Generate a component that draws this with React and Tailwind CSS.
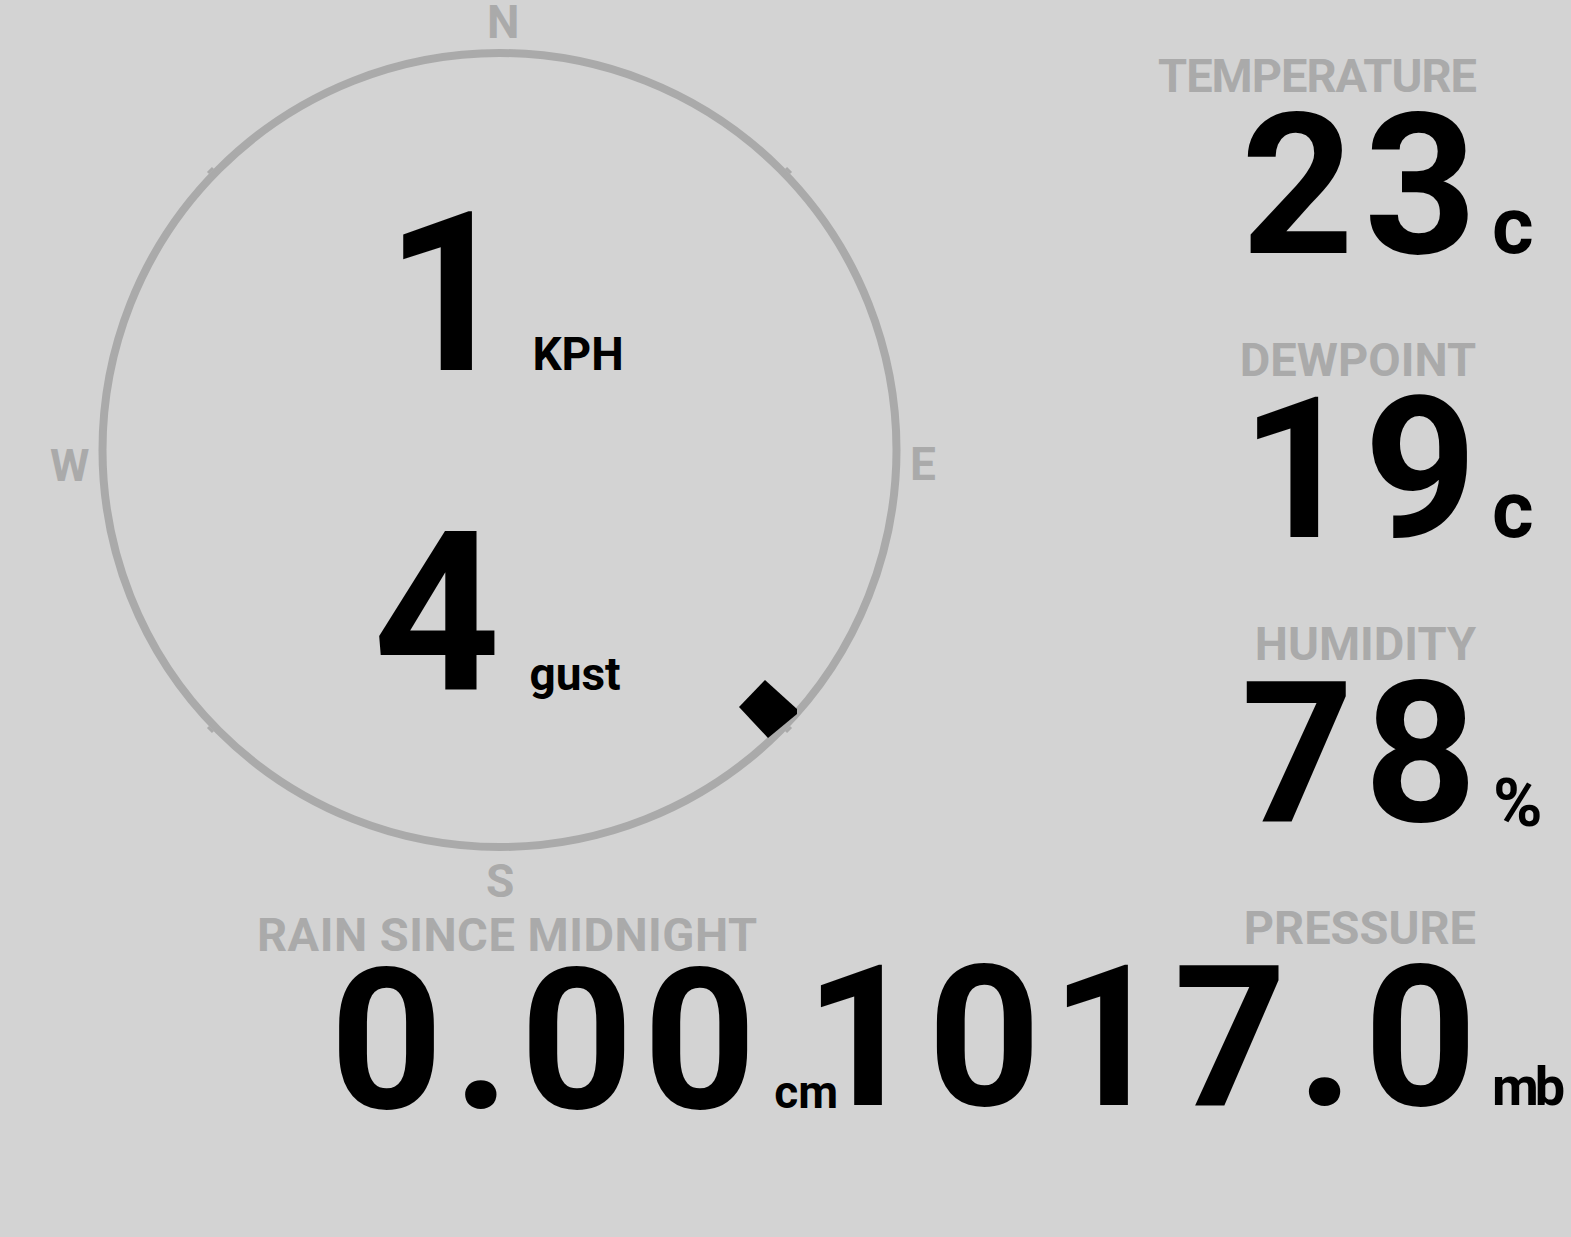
import React from 'react';

const font = { fontFamily: 'Roboto, "DejaVu Sans", sans-serif' };

function Stat({ label, value, unit, labelClass = '', unitClass }) {
  return (
    <div className="flex flex-col items-end">
      <div className={`text-[47px] leading-none font-bold text-[#aaaaaa] ${labelClass}`}>{label}</div>
      <div className="flex items-baseline mt-[-12px]">
        <span className="text-[197px] leading-none font-bold text-black whitespace-nowrap tracking-[10px] mr-[-11px]">
          {value}
        </span>
        <span className={`relative w-0 overflow-visible whitespace-nowrap leading-none font-bold text-black ${unitClass}`}>
          {unit}
        </span>
      </div>
    </div>
  );
}

function Compass() {
  return (
    <div className="relative w-[1000px] h-[905px]">
      <svg width="1000" height="905" className="absolute left-0 top-0">
        <circle cx="499.5" cy="450" r="397" fill="none" stroke="#aaaaaa" strokeWidth="8" />
        <g stroke="#aaaaaa" strokeWidth="3">
          <line x1="213" y1="168" x2="208" y2="173" />
          <line x1="786" y1="168" x2="791" y2="173" />
          <line x1="213" y1="732" x2="208" y2="727" />
          <line x1="786" y1="732" x2="791" y2="727" />
        </g>
        <polygon points="765,680 797,709 797,714 768,738 739,707" fill="#000" />
      </svg>

      {/* compass points */}
      <span className="absolute top-[-1px] left-[487px] text-[46px] leading-none font-bold text-[#aaaaaa]">N</span>
      <span className="absolute top-[441px] left-[910px] text-[46px] leading-none font-bold text-[#aaaaaa]">E</span>
      <span className="absolute top-[858px] left-[486px] text-[46px] leading-none font-bold text-[#aaaaaa]">S</span>
      <span className="absolute top-[443px] left-[50px] text-[45px] leading-none font-bold text-[#aaaaaa]">W</span>

      {/* wind speed */}
      <div className="absolute top-[183px] left-[385px] flex items-baseline">
        <span className="text-[222px] leading-none font-bold text-black">1</span>
        <span className="ml-[20px] text-[46px] leading-none font-bold text-black">KPH</span>
      </div>
      <div className="absolute top-[503px] left-[373px] flex items-baseline">
        <span className="text-[222px] leading-none font-bold text-black">4</span>
        <span className="ml-[29px] text-[46px] leading-none font-bold text-black">gust</span>
      </div>
    </div>
  );
}

export default function App() {
  return (
    <div className="w-[1571px] h-[1237px] bg-[#d3d3d3] overflow-hidden" style={font}>
      <div className="flex">
        {/* Left: compass + rain */}
        <div className="flex flex-col w-[1000px] shrink-0">
          <Compass />
          <div className="flex flex-col mt-[6px]">
            <div className="ml-[257px] text-[47px] leading-none font-bold text-[#aaaaaa] whitespace-nowrap tracking-[0.5px]">
              RAIN SINCE MIDNIGHT
            </div>
            <div className="ml-[330px] mt-[-16px] flex items-baseline">
              <span className="text-[197px] leading-none font-bold text-black tracking-[10px] mr-[-10px]">0.00</span>
              <span className="ml-[18px] text-[46px] leading-none font-bold text-black">cm</span>
            </div>
          </div>
        </div>

        {/* Right: readings */}
        <div className="w-[571px] min-w-0 shrink-0 flex flex-col items-end gap-[52px] pt-[52px] pr-[95px]">
          <Stat label="TEMPERATURE" labelClass="tracking-[-1px]" value="23" unit="c" unitClass="left-[16px] text-[80px]" />
          <Stat label="DEWPOINT" value="19" unit="c" unitClass="left-[16px] text-[80px]" />
          <Stat label="HUMIDITY" value="78" unit="%" unitClass="left-[17px] top-[5px] text-[67px]">
          </Stat>
          <Stat label="PRESSURE" value="1017.0" unit="mb" unitClass="left-[16px] text-[54px] tracking-[-4px]" />
        </div>
      </div>
    </div>
  );
}
